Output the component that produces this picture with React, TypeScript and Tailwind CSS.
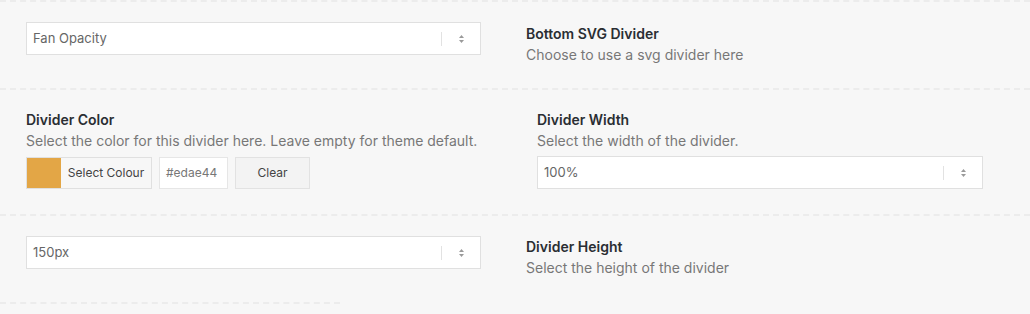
import React from "react";

const font = { fontFamily: "Inter, 'Noto Sans', sans-serif" };

function Arrows() {
  return (
    <svg width="7" height="10" viewBox="0 0 7 10" className="block">
      <path d="M3.5 1 L6 4 L1 4 Z" fill="#9a9a9a" />
      <path d="M3.5 9 L6 6 L1 6 Z" fill="#9a9a9a" />
    </svg>
  );
}

function Select({ value, width }: { value: string; width: string }) {
  return (
    <div className={`flex h-[33px] items-center border border-[#e0e0e0] bg-white ${width}`}>
      <span className="flex-1 pl-[6px] pt-px text-[13px] text-[#666]">{value}</span>
      <span className="h-[14px] w-px bg-[#e2e2e2]" />
      <span className="flex w-[38px] justify-center">
        <Arrows />
      </span>
    </div>
  );
}

function Label({ title, desc }: { title: string; desc: string }) {
  return (
    <div className="flex flex-col">
      <div className="text-[14px] leading-[20px] font-semibold text-[#2a2e33]">{title}</div>
      <div className="mt-px text-[14px] leading-[20px] text-[#777]">{desc}</div>
    </div>
  );
}

function Dash({ w }: { w: string }) {
  return <div className={`h-0 border-t-2 border-dashed border-[#ececec] ${w}`} />;
}

export default function App() {
  return (
    <div className="h-[314px] w-[1030px] overflow-hidden bg-[#f7f7f7]" style={font}>
      <Dash w="w-full" />
      <div className="flex h-[86px]">
        <div className="pl-[26px] pt-[20px]">
          <Select value="Fan Opacity" width="w-[455px]" />
        </div>
        <div className="pl-[45px] pt-[22px]">
          <Label title="Bottom SVG Divider" desc="Choose to use a svg divider here" />
        </div>
      </div>
      <Dash w="w-full" />
      <div className="flex h-[124px]">
        <div className="w-[537px] pl-[26px] pt-[20px]">
          <Label
            title="Divider Color"
            desc="Select the color for this divider here. Leave empty for theme default."
          />
          <div className="mt-[6px] flex h-[32px] gap-[7px]">
            <div className="flex h-full w-[126px] border border-[#e0e0e0] bg-[#f7f7f7]">
              <span className="h-full w-[34px] bg-[#e3a646]" />
              <span className="flex flex-1 items-center justify-center text-[12px] text-[#444]">Select Colour</span>
            </div>
            <div className="flex h-full w-[69px] items-center border border-[#e6e6e6] bg-white pl-[6px] text-[12px] text-[#777]">
              #edae44
            </div>
            <div className="flex h-full w-[75px] items-center justify-center border border-[#e2e2e2] bg-[#f3f3f3] text-[12px] text-[#444]">
              Clear
            </div>
          </div>
        </div>
        <div className="pt-[20px]">
          <Label title="Divider Width" desc="Select the width of the divider." />
          <div className="mt-[5px]">
            <Select value="100%" width="w-[446px]" />
          </div>
        </div>
      </div>
      <Dash w="w-full" />
      <div className="flex h-[86px]">
        <div className="pl-[26px] pt-[20px]">
          <Select value="150px" width="w-[455px]" />
        </div>
        <div className="pl-[45px] pt-[21px]">
          <Label title="Divider Height" desc="Select the height of the divider" />
        </div>
      </div>
      <Dash w="w-[340px]" />
    </div>
  );
}
